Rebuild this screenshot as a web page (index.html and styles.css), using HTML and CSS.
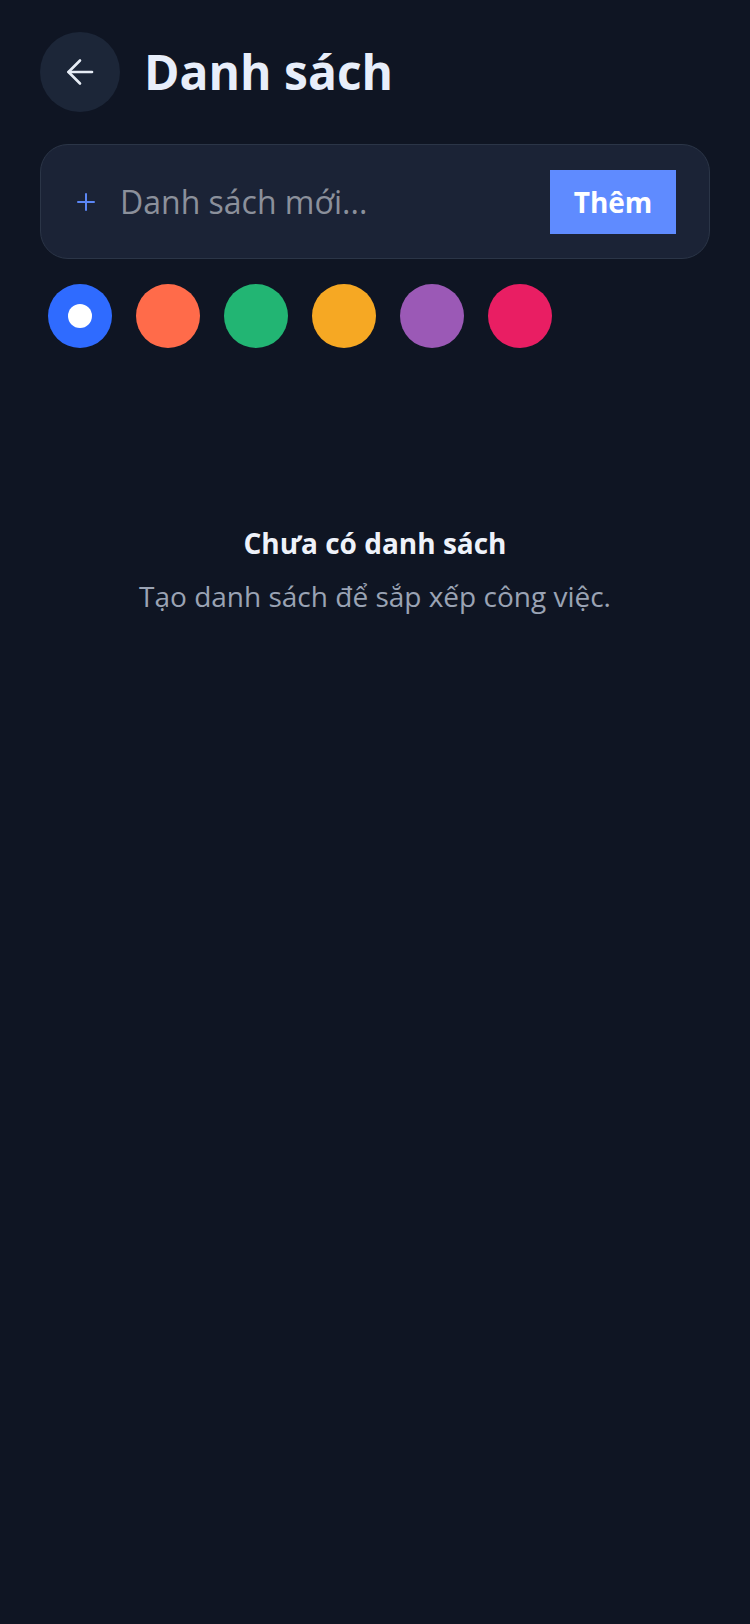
FILE: index.html
```html
<!DOCTYPE html>
<html lang="vi">
<head>
<meta charset="utf-8">
<title>Danh sách</title>
<link rel="stylesheet" href="styles.css">
</head>
<body>
<div class="page">
  <header class="header">
    <button class="back" aria-label="Quay lại">
      <svg width="28" height="28" viewBox="0 0 28 28" fill="none" stroke="#e6ecf5" stroke-width="2.6" stroke-linecap="round" stroke-linejoin="round">
        <path d="M26 14H2.5"/>
        <path d="M14 2.5L2.5 14L14 25.5"/>
      </svg>
    </button>
    <h1 class="title">Danh sách</h1>
  </header>

  <form class="add-card" onsubmit="return false">
    <svg class="plus" width="18" height="18" viewBox="0 0 18 18" fill="none" stroke="#5b86f5" stroke-width="2" stroke-linecap="round">
      <path d="M9 1V17"/>
      <path d="M1 9H17"/>
    </svg>
    <input class="add-input" type="text" placeholder="Danh sách mới...">
    <button class="add-btn" type="submit">Thêm</button>
  </form>

  <div class="swatches">
    <span class="swatch swatch-blue selected"></span>
    <span class="swatch swatch-orange"></span>
    <span class="swatch swatch-green"></span>
    <span class="swatch swatch-yellow"></span>
    <span class="swatch swatch-purple"></span>
    <span class="swatch swatch-pink"></span>
  </div>

  <section class="empty">
    <h2 class="empty-title">Chưa có danh sách</h2>
    <p class="empty-text">Tạo danh sách để sắp xếp công việc.</p>
  </section>
</div>
</body>
</html>
```

FILE: styles.css
```css
* {
  box-sizing: border-box;
}

html, body {
  margin: 0;
  padding: 0;
  background: #0f1523;
}

body {
  font-family: "Open Sans", "Noto Sans", sans-serif;
  color: #e8edf7;
  min-height: 1624px;
}

.page {
  padding: 32px 40px 0 40px;
}

.header {
  display: flex;
  align-items: center;
  gap: 24px;
  height: 80px;
}

.back {
  width: 80px;
  height: 80px;
  border-radius: 50%;
  border: none;
  background: #1c2638;
  display: flex;
  align-items: center;
  justify-content: center;
  padding: 0;
  flex: none;
}

.title {
  margin: 0;
  font-size: 48px;
  font-weight: 700;
  line-height: 66px;
  color: #e8eefa;
  letter-spacing: 0;
}

.add-card {
  margin-top: 32px;
  height: 115px;
  display: flex;
  align-items: center;
  background: #1b2336;
  border: 1px solid #2b3547;
  border-radius: 28px;
  padding: 0 33px 0 36px;
}

.plus {
  flex: none;
}

.add-input {
  flex: 1;
  min-width: 0;
  margin-left: 25px;
  background: transparent;
  border: none;
  outline: none;
  font-family: "Open Sans", "Noto Sans", sans-serif;
  font-size: 32px;
  color: #e8edf7;
  padding: 0;
  height: 46px;
}

.add-input::placeholder {
  color: #8b909b;
  opacity: 1;
}

.add-btn {
  flex: none;
  width: 126px;
  height: 64px;
  border: none;
  border-radius: 0;
  background: #5f8bff;
  color: #ffffff;
  font-family: "Open Sans", "Noto Sans", sans-serif;
  font-size: 28px;
  font-weight: 700;
  padding: 0;
}

.swatches {
  display: flex;
  gap: 24px;
  margin-top: 25px;
  padding-left: 8px;
}

.swatch {
  width: 64px;
  height: 64px;
  border-radius: 50%;
  display: flex;
  align-items: center;
  justify-content: center;
}

.swatch.selected::after {
  content: "";
  width: 24px;
  height: 24px;
  border-radius: 50%;
  background: #ffffff;
}

.swatch-blue { background: #2f6bff; }
.swatch-orange { background: #ff6b4a; }
.swatch-green { background: #22b573; }
.swatch-yellow { background: #f6a823; }
.swatch-purple { background: #9b59b6; }
.swatch-pink { background: #e91e63; }

.empty {
  margin-top: 176px;
  text-align: center;
}

.empty-title {
  margin: 0;
  font-size: 28px;
  font-weight: 700;
  line-height: 38px;
  color: #eef2fa;
}

.empty-text {
  margin: 15px 0 0 0;
  font-size: 28px;
  line-height: 38px;
  color: #9aa3b4;
}
```
